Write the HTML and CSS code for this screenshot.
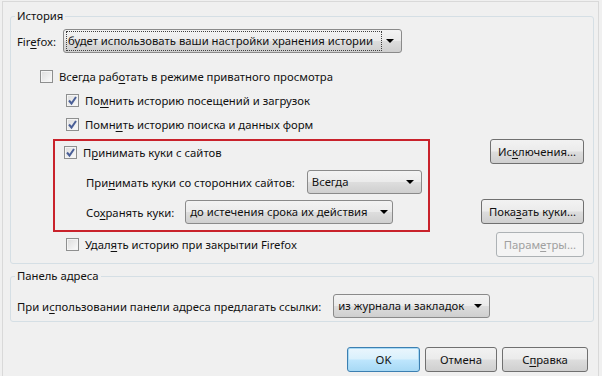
FILE: index.html
```html
<!DOCTYPE html>
<html>

<head>
    <meta charset="utf-8">
    <title>Приватность</title>

    <link rel="stylesheet" href="styles.css">
</head>

<body>

    <div class="window">
        <fieldset class="group history">
            <legend>История</legend>

            <div class="row firefox-row">
                <span class="label">Fir<u>e</u>fox:</span>
                <div class="select select-history">
                    <span class="select-text focused">будет использовать ваши настройки хранения истории</span>
                    <span class="arrow"></span>
                </div>
            </div>

            <div class="row check-row indent-1">
                <span class="check"></span>Всегда раб<u>о</u>тать в режиме приватного просмотра
            </div>
            <div class="row check-row indent-2">
                <span class="check checked"><svg viewBox="0 0 13 13" width="13" height="13"><path d="M3 6.5 L5.5 9.5 L10 3" /></svg></span>По<u>м</u>нить историю посещений и загрузок
            </div>
            <div class="row check-row indent-2">
                <span class="check checked"><svg viewBox="0 0 13 13" width="13" height="13"><path d="M3 6.5 L5.5 9.5 L10 3" /></svg></span>Помн<u>и</u>ть историю поиска и данных форм
            </div>

            <div class="cookies">
                <div class="cookie-box">
                    <div class="row check-row cookie-accept">
                        <span class="check checked"><svg viewBox="0 0 13 13" width="13" height="13"><path d="M3 6.5 L5.5 9.5 L10 3" /></svg></span>П<u>р</u>инимать куки с сайтов
                    </div>
                    <div class="row sub-row third-party">
                        <span class="label">При<u>н</u>имать куки со сторонних сайтов:</span>
                        <div class="select select-third">
                            <span class="select-text">Всегда</span>
                            <span class="arrow"></span>
                        </div>
                    </div>
                    <div class="row sub-row keep-row">
                        <span class="label">Со<u>х</u>ранять куки:</span>
                        <div class="select select-keep">
                            <span class="select-text">до истечения срока их действия</span>
                            <span class="arrow"></span>
                        </div>
                    </div>
                </div>

                <div class="side-buttons">
                    <button class="btn">Ис<u>к</u>лючения...</button>
                    <button class="btn show-cookies">Пока<u>з</u>ать куки...</button>
                </div>
            </div>

            <div class="row clear-row">
                <div class="check-row">
                    <span class="check"></span>Удал<u>я</u>ть историю при закрытии Firefox
                </div>
                <button class="btn disabled">Парам<u>е</u>тры...</button>
            </div>
        </fieldset>

        <fieldset class="group address">
            <legend>Панель адреса</legend>

            <div class="row address-row">
                <span class="label">При и<u>с</u>пользовании панели адреса предлагать ссылки:</span>
                <div class="select select-address">
                    <span class="select-text">из журнала и закладок</span>
                    <span class="arrow"></span>
                </div>
            </div>
        </fieldset>

        <div class="dialog-buttons">
            <button class="btn default ok">OK</button>
            <button class="btn cancel">Отмена</button>
            <button class="btn help">С<u>п</u>равка</button>
        </div>
    </div>

</body>

</html>
```

FILE: styles.css
```css
/* Page */

body {
    margin: 0;
    background: #f0f0f0;
    font-family: "Noto Sans", "Open Sans", sans-serif;
    font-size: 11.3px;
    color: #111;
}

u {
    text-decoration-thickness: 1px;
    text-underline-offset: 2px;
}

.window {
    margin: 1px 3px 0 2px;
    height: 380px;
    padding: 6px 4px 0 7px;
    border: 1px solid #d9d9d9;
    box-sizing: border-box;
}

/* Group boxes */

.group {
    margin: 0;
    padding: 0 9px 6px 4px;
    border: 1px solid #d5dfe5;
    border-radius: 3px;
}

.group legend {
    padding: 0 2px;
    line-height: 16px;
}

.row {
    display: flex;
    align-items: center;
    height: 24px;
    padding-left: 2px;
}

.label {
    white-space: nowrap;
}

/* Combo boxes */

.select {
    display: flex;
    align-items: center;
    height: 24px;
    box-sizing: border-box;
    padding: 0 2px;
    border: 1px solid #8a8a8a;
    border-radius: 3px;
    background: linear-gradient(#f3f3f3, #ebebeb 48%, #dddddd 52%, #cfcfcf);
    white-space: nowrap;
}

.select-text {
    flex: 1;
    padding: 1px 1px 2px;
    border: 1px dotted transparent;
}

.select-text.focused {
    border-color: #404040;
}

.arrow {
    flex: none;
    width: 0;
    height: 0;
    margin: 0 5px 0 4px;
    border-left: 4px solid transparent;
    border-right: 4px solid transparent;
    border-top: 4px solid #000;
}

.firefox-row {
    margin-top: 5px;
}

.select-history {
    width: 339px;
    margin-left: 7px;
}

.select-third {
    width: 115px;
    margin-left: 12px;
}

.select-keep {
    width: 208px;
    margin-left: 11px;
}

.select-keep .arrow {
    margin-right: 2px;
}

.select-address {
    width: 157px;
    margin-left: 12px;
}

/* Check boxes */

.check-row {
    display: flex;
    align-items: center;
    white-space: nowrap;
}

.check {
    display: inline-block;
    flex: none;
    width: 13px;
    height: 13px;
    margin-right: 6px;
    box-sizing: border-box;
    border: 1px solid #8e8f8f;
    background: linear-gradient(135deg, #dcdcdc, #fbfbfb);
    box-shadow: inset 0 0 0 1px #f4f4f4;
}

.check svg {
    display: block;
    margin: -1px;
}

.check path {
    fill: none;
    stroke: #4a5f97;
    stroke-width: 2;
}

.indent-1 {
    margin-top: 11px;
    padding-left: 25px;
}

.indent-2 {
    padding-left: 51px;
}

/* Cookies */

.cookies {
    display: flex;
    justify-content: space-between;
    margin: 3px 0 0 38px;
}

.cookie-box {
    width: 377px;
    height: 93px;
    box-sizing: border-box;
    padding: 0 0 0 9px;
    border: 2px solid #c9222b;
}

.cookie-accept {
    height: 22px;
    padding-left: 0;
}

.sub-row {
    padding-left: 22px;
}

.third-party {
    margin-top: 7px;
}

.keep-row {
    margin-top: 6px;
}

.side-buttons {
    display: flex;
    flex-direction: column;
    align-items: flex-end;
}

.show-cookies {
    margin-top: 35px;
}

.clear-row {
    justify-content: space-between;
    height: 25px;
    padding-left: 51px;
}

/* Buttons */

.btn {
    height: 25px;
    padding: 0 7px 1px;
    border: 1px solid #707070;
    border-radius: 3px;
    background: linear-gradient(#f2f2f2, #ebebeb 48%, #dddddd 52%, #cfcfcf);
    font: inherit;
    color: #111;
    white-space: nowrap;
}

.btn.disabled {
    border-color: #adb2b5;
    background: #f4f4f4;
    color: #a0a0a0;
}

.btn.default {
    border-color: #3c7fb1;
    background: linear-gradient(#eaf6fd, #d9f0fc 48%, #bee6fd 52%, #a7d9f5);
    box-shadow: inset 0 0 0 1px #a7d9f5;
}

/* Address bar */

.address {
    margin-top: 4px;
    padding-bottom: 3px;
}

.address-row {
    margin-top: 10px;
}

.dialog-buttons {
    display: flex;
    justify-content: flex-end;
    gap: 5px;
    margin-top: 25px;
    padding-right: 6px;
}

.ok {
    width: 73px;
}

.cancel {
    width: 72px;
}

.help {
    width: 86px;
}
```
